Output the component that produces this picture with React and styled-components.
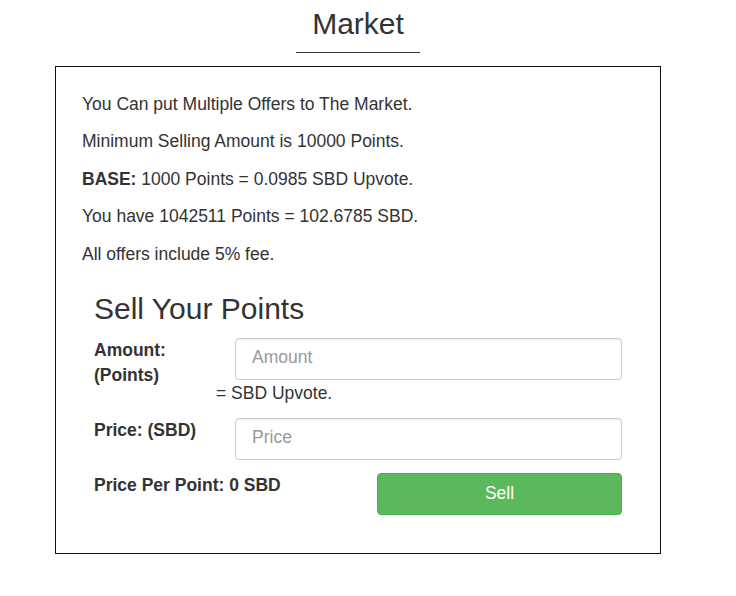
import React from 'react'
import styled, { createGlobalStyle } from 'styled-components'

const Global = createGlobalStyle`
  body {
    margin: 0;
    background: #fff;
    font-family: "Liberation Sans", Arial, sans-serif;
    color: #333;
  }
`

const Page = styled.div`
    width: 606px;
    margin-left: 55px;
    padding-top: 7px;
`

const Title = styled.h1`
    margin: 0;
    font-size: 30px;
    font-weight: 400;
    line-height: 33px;
    text-align: center;
    color: #333;
`

const Rule = styled.div`
    width: 124px;
    height: 1px;
    background: #333;
    margin: 12px auto 13px;
`

const Box = styled.div`
    border: 1px solid #111;
    padding: 24px 26px 38px 26px;
`

const Line = styled.p`
    margin: 0 0 10px;
    font-size: 17.5px;
    line-height: 27.4px;
    b { font-weight: 700; }
`

const Section = styled.div`
    padding-left: 12px;
    margin-top: 24px;
`

const Heading = styled.h2`
    margin: 0 0 13px;
    font-size: 30px;
    font-weight: 400;
    line-height: 33px;
`

const Row = styled.div`
    display: grid;
    grid-template-columns: ${p => p.$left}px 1fr;
    align-items: start;
    margin-top: ${p => p.$top || 0}px;
`

const Label = styled.label`
    font-size: 17.5px;
    font-weight: 700;
    line-height: 25px;
`

const Input = styled.input`
    box-sizing: border-box;
    width: 387px;
    height: 42px;
    padding: 4px 16px 7px;
    font-family: inherit;
    font-size: 17.5px;
    color: #555;
    border: 1px solid #ccc;
    border-radius: 4px;
    box-shadow: inset 0 1px 1px rgba(0,0,0,0.075);
    outline: none;
    &::placeholder { color: #999; }
`

const Note = styled.div`
    margin: -5px 0 0 122px;
    font-size: 17.5px;
    line-height: 20px;
`

const Button = styled.button`
    box-sizing: border-box;
    width: 245px;
    height: 42px;
    padding: 0 0 2px;
    background: #5cb85c;
    border: 1px solid #4cae4c;
    border-radius: 4px;
    color: #fff;
    font-family: inherit;
    font-size: 17.5px;
    cursor: pointer;
`

export default function App() {
  return (
    <>
      <Global />
      <Page>
        <Title>Market</Title>
        <Rule />
        <Box>
          <Line>You Can put Multiple Offers to The Market.</Line>
          <Line>Minimum Selling Amount is 10000 Points.</Line>
          <Line><b>BASE:</b> 1000 Points = 0.0985 SBD Upvote.</Line>
          <Line>You have 1042511 Points = 102.6785 SBD.</Line>
          <Line>All offers include 5% fee.</Line>
          <Section>
            <Heading>Sell Your Points</Heading>
            <Row $left={141}>
              <Label>Amount:<br />(Points)</Label>
              <Input placeholder="Amount" />
            </Row>
            <Note>= SBD Upvote.</Note>
            <Row $left={141} $top={15}>
              <Label>Price: (SBD)</Label>
              <Input placeholder="Price" />
            </Row>
            <Row $left={283} $top={13}>
              <Label>Price Per Point: 0 SBD</Label>
              <Button>Sell</Button>
            </Row>
          </Section>
        </Box>
      </Page>
    </>
  )
}
